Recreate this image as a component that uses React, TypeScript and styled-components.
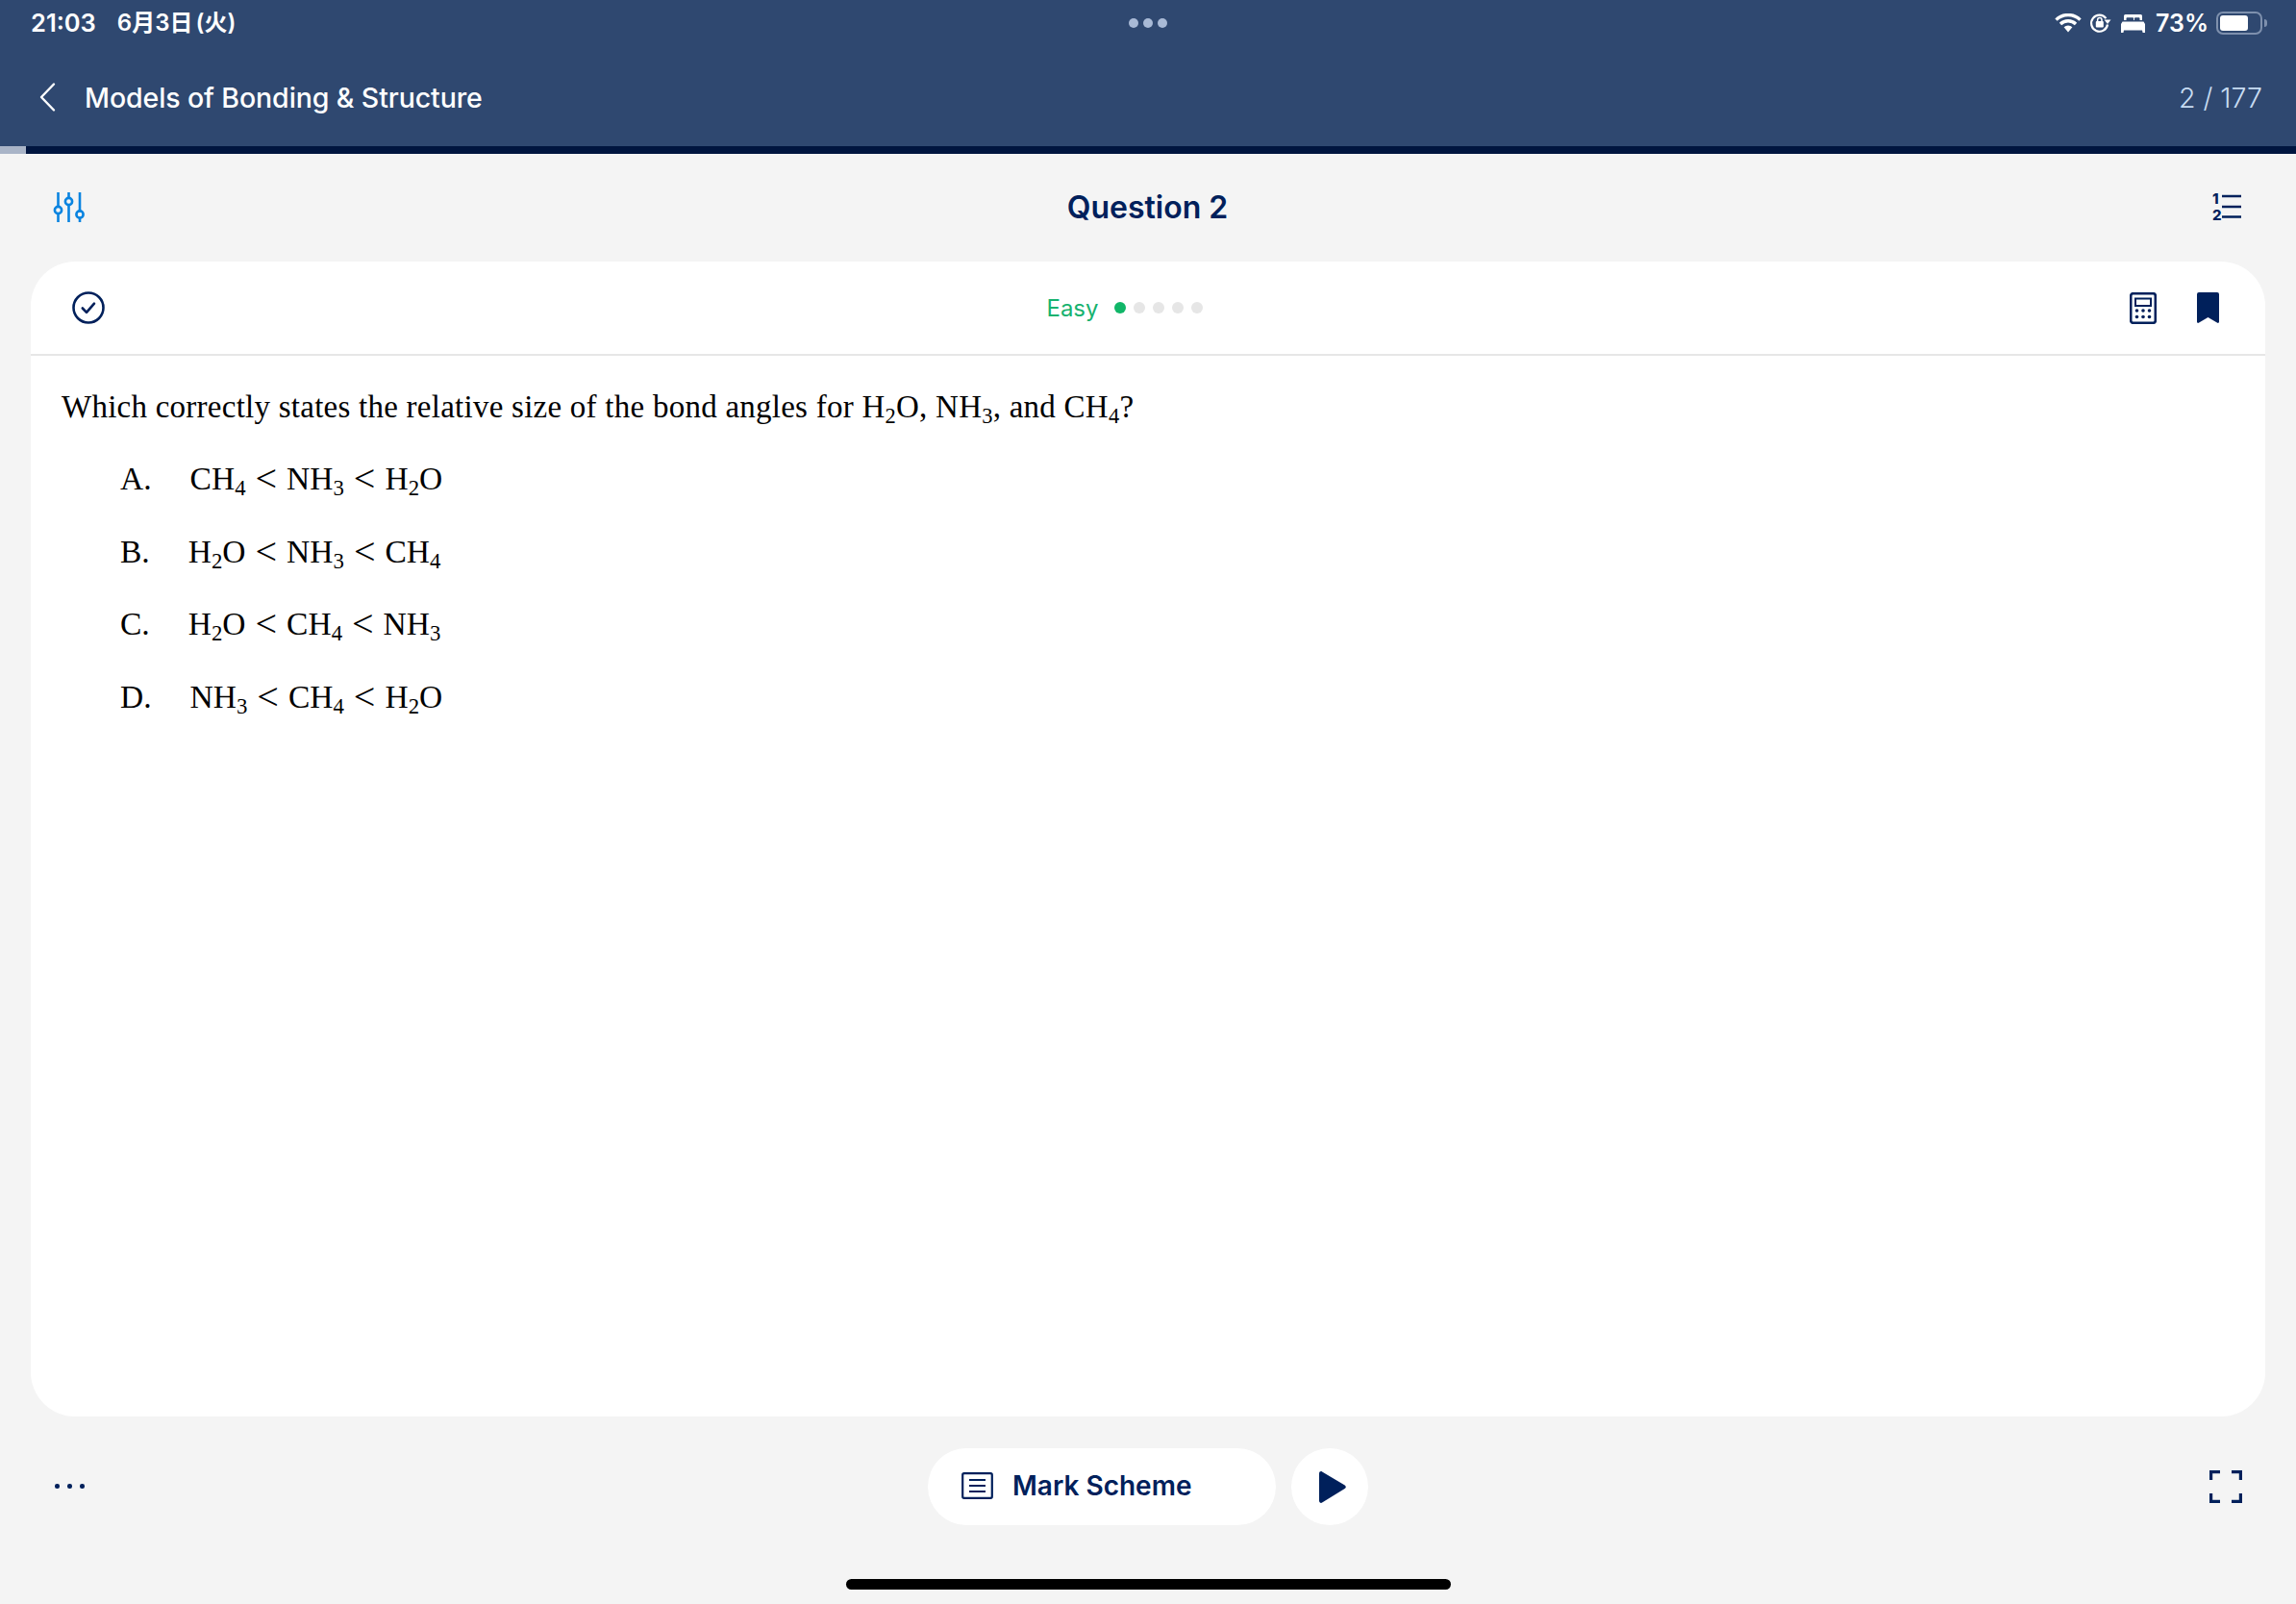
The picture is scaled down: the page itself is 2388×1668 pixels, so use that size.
import * as React from "react";
import styled, {createGlobalStyle} from "styled-components";

const NAVY = "#00205b";

const GlobalStyle = createGlobalStyle`
    html, body {
        margin: 0;
        padding: 0;
        background: #f4f4f4;
    }
    * {
        box-sizing: border-box;
    }
`;

const Page = styled.div`
    width: 2388px;
    height: 1668px;
    display: flex;
    flex-direction: column;
    background: #f4f4f4;
    font-family: Inter, "Noto Sans CJK JP", sans-serif;
    overflow: hidden;
`;

const Header = styled.header`
    height: 152px;
    background: #2f4870;
    color: #ffffff;
    display: flex;
    flex-direction: column;
`;

const StatusBar = styled.div`
    height: 48px;
    padding: 0 32px 0 32px;
    display: grid;
    grid-template-columns: 1fr auto 1fr;
    align-items: center;
`;

const StatusTime = styled.div`
    display: flex;
    align-items: center;
    gap: 22px;
    font-size: 25.5px;
    line-height: 30px;
    font-weight: 600;
`;

const DateText = styled.span`
    font-size: 24px;
    line-height: 30px;
    font-weight: 600;
    word-spacing: -3px;
`;

const MultitaskDots = styled.div`
    display: flex;
    gap: 5px;
`;

const MultitaskDot = styled.span`
    width: 10px;
    height: 10px;
    border-radius: 50%;
    background: #a9bad6;
`;

const StatusIcons = styled.div`
    display: flex;
    justify-content: flex-end;
    align-items: center;
`;

const BatteryText = styled.span`
    font-size: 25px;
    font-weight: 600;
    margin: 0 8px 0 11px;
`;

const Battery = styled.div`
    width: 48px;
    height: 24px;
    border: 2px solid #7e90ad;
    border-radius: 7px;
    padding: 2px;
    display: flex;
    position: relative;
    margin-right: 3px;
    &::after {
        content: "";
        position: absolute;
        right: -7px;
        top: 6px;
        width: 3px;
        height: 8px;
        border-radius: 0 3px 3px 0;
        background: #7e90ad;
    }
`;

const BatteryFill = styled.div`
    width: 73%;
    background: #ffffff;
    border-radius: 3px;
`;

const NavRow = styled.div`
    flex: 1;
    padding: 5px 35px 0 39px;
    display: flex;
    align-items: center;
    margin-bottom: 3px;
`;

const NavTitle = styled.div`
    flex: 1;
    margin-left: 28px;
    font-size: 28.5px;
    font-weight: 500;
    letter-spacing: -0.1px;
`;

const Counter = styled.div`
    font-size: 28.5px;
    font-weight: 300;
    color: #c7dcf2;
`;

const ProgressTrack = styled.div`
    height: 8px;
    background: #00153f;
    display: flex;
`;

const ProgressFill = styled.div`
    width: 27px;
    background: #a9b4c7;
`;

const Toolbar = styled.div`
    height: 112px;
    padding: 0 56px 2px 55px;
    display: grid;
    grid-template-columns: 1fr auto 1fr;
    align-items: center;
`;

const QuestionTitle = styled.h1`
    margin: 0;
    font-size: 32px;
    font-weight: 600;
    color: ${NAVY};
`;

const EndSlot = styled.div`
    display: flex;
    justify-content: flex-end;
`;

const Card = styled.main`
    height: 1201px;
    margin: 0 32px;
    background: #ffffff;
    border-radius: 46px;
    display: flex;
    flex-direction: column;
`;

const CardHeader = styled.div`
    height: 98px;
    padding: 0 48px 0 43px;
    border-bottom: 2px solid #e6e6e6;
    display: grid;
    grid-template-columns: 1fr auto 1fr;
    align-items: center;
`;

const Difficulty = styled.div`
    display: flex;
    align-items: center;
    gap: 8px;
    margin-left: -44px;
`;

const DifficultyLabel = styled.span`
    font-size: 24px;
    font-weight: 400;
    color: #17b26f;
    margin-right: 8px;
`;

const Dot = styled.span<{$on?: boolean}>`
    width: 12px;
    height: 12px;
    border-radius: 50%;
    background: ${props => props.$on ? "#10b668" : "#e6e6e6"};
`;

const CardTools = styled.div`
    display: flex;
    justify-content: flex-end;
    align-items: center;
    gap: 42px;
`;

const CardBody = styled.div`
    flex: 1;
    padding: 33px 32px;
    font-family: "Liberation Serif", serif;
    color: #000000;
`;

const Question = styled.p`
    margin: 0 0 35px;
    font-size: 33px;
    line-height: 40px;
    letter-spacing: 0.25px;
`;

const OptionRow = styled.div`
    height: 75.6px;
    padding-left: 61px;
    display: flex;
    align-items: flex-start;
    font-size: 33.5px;
    line-height: 40px;
`;

const OptionLabel = styled.span`
    margin-right: 40px;
`;

const Rel = styled.span`
    margin: 0 10px;
    font-size: 40px;
    line-height: 0;
    vertical-align: -2px;
`;

const Sub = styled.sub`
    font-size: 68%;
    line-height: 0;
    vertical-align: -6px;
`;

const Footer = styled.footer`
    height: 169px;
    padding: 33px 56px 0 56px;
    display: grid;
    grid-template-columns: 1fr auto 1fr;
    align-items: start;
`;

const MoreDots = styled.div`
    display: flex;
    gap: 8.5px;
    margin: 37px 0 0 1px;
`;

const MoreDot = styled.span`
    width: 4.5px;
    height: 4.5px;
    border-radius: 50%;
    background: ${NAVY};
`;

const FooterActions = styled.div`
    display: flex;
    gap: 16px;
`;

const SchemeButton = styled.button`
    width: 362px;
    height: 80px;
    border: 0;
    border-radius: 40px;
    background: #ffffff;
    padding: 0 0 2px 35px;
    display: flex;
    align-items: center;
    gap: 20px;
    font-family: Inter, sans-serif;
    font-size: 28px;
    font-weight: 600;
    color: ${NAVY};
`;

const PlayButton = styled.button`
    width: 80px;
    height: 80px;
    border: 0;
    border-radius: 50%;
    background: #ffffff;
    padding: 0 0 0 6px;
    display: flex;
    align-items: center;
    justify-content: center;
`;

const FullscreenSlot = styled(EndSlot)`
    padding-top: 23px;
`;

const HomeRow = styled.div`
    display: flex;
    justify-content: center;
`;

const HomeBar = styled.div`
    width: 629px;
    height: 11px;
    border-radius: 6px;
    background: #000000;
`;

const ListSvg = styled.svg`
    margin: -6px 0;
`;

const H2O = () => <>H<Sub>2</Sub>O</>;
const NH3 = () => <>NH<Sub>3</Sub></>;
const CH4 = () => <>CH<Sub>4</Sub></>;

const OPTIONS: Array<[string, Array<React.FC>]> = [
    ["A.", [CH4, NH3, H2O]],
    ["B.", [H2O, NH3, CH4]],
    ["C.", [H2O, CH4, NH3]],
    ["D.", [NH3, CH4, H2O]],
];

function Option(props: {label: string, parts: Array<React.FC>}) {
    return (
        <OptionRow>
            <OptionLabel>{props.label}</OptionLabel>
            <span>
                {props.parts.map((Part, i) => (
                    <React.Fragment key={i}>
                        {i > 0 && <Rel>&lt;</Rel>}
                        <Part/>
                    </React.Fragment>
                ))}
            </span>
        </OptionRow>
    );
}

const WifiIcon = () => (
    <svg width="28" height="20" viewBox="0 0 28 20" style={{marginRight: 8}}>
        <path fill="none" stroke="#fff" strokeWidth="3.4" d="M1.5 6.6a18 18 0 0 1 25 0M6 11a11.6 11.6 0 0 1 16 0"/>
        <path fill="#fff" d="M9.6 14.3a6.4 6.4 0 0 1 8.8 0L14 19.4z"/>
    </svg>
);

const RotationLockIcon = () => (
    <svg width="23" height="22" viewBox="0 0 23 22" style={{marginRight: 10}}>
        <path fill="none" stroke="#fff" strokeWidth="2.2" d="M19 12.5a8.5 8.5 0 1 1-1.6-6.4"/>
        <path fill="#fff" d="M15.5 7.5h7l-3.5 4.5z"/>
        <rect x="6.8" y="9" width="8" height="6.5" rx="1" fill="#fff"/>
        <path fill="none" stroke="#fff" strokeWidth="1.5" d="M8.6 9.5V7.8a2.2 2.2 0 0 1 4.4 0v1.7"/>
    </svg>
);

const BedIcon = () => (
    <svg width="25" height="19" viewBox="0 0 25 19">
        <path fill="#fff" d="M3 1.5A1.5 1.5 0 0 1 4.5 0h16A1.5 1.5 0 0 1 22 1.5V6h-2.5V4.2c0-.5-.4-.9-.9-.9h-3.7c-.5 0-.9.4-.9.9V6h-.9V4.2c0-.5-.4-.9-.9-.9H6.4c-.5 0-.9.4-.9.9V6H3z"/>
        <path fill="#fff" d="M1.5 7.5h22L25 10v9h-2.4l-.6-2.4H3L2.4 19H0v-9z"/>
    </svg>
);

const BackIcon = () => (
    <svg width="21" height="32" viewBox="0 0 21 32">
        <path fill="none" stroke="#fff" strokeWidth="2.4" strokeLinecap="round" strokeLinejoin="round" d="M17 2.5 4 16l13 13.5"/>
    </svg>
);

const SlidersIcon = () => (
    <svg width="34" height="31" viewBox="0 0 34 31" fill="none" stroke="#0a84e0" strokeWidth="2.6">
        <path d="M5.5 0v16M5.5 23v8M16.5 0v6M16.5 13v18M28 0v19M28 26v5"/>
        <circle cx="5.5" cy="18.5" r="3.6"/>
        <circle cx="16.5" cy="9.5" r="3.6"/>
        <circle cx="28" cy="23" r="3.6"/>
    </svg>
);

const NumberedListIcon = () => (
    <ListSvg width="32" height="43" viewBox="0 -6 32 43">
        <text x="1" y="12" fontFamily="Inter, sans-serif" fontSize="15" fontWeight="800" fill={NAVY}>1</text>
        <text x="1" y="29" fontFamily="Inter, sans-serif" fontSize="15" fontWeight="800" fill={NAVY}>2</text>
        <path stroke={NAVY} strokeWidth="2.6" d="M11 4h20M11 15h20M11 25.5h20"/>
    </ListSvg>
);

const CheckCircleIcon = () => (
    <svg width="34" height="34" viewBox="0 0 34 34" fill="none" stroke={NAVY}>
        <circle cx="17" cy="17" r="15.5" strokeWidth="2.6"/>
        <path strokeWidth="2.6" strokeLinecap="round" strokeLinejoin="round" d="m10.8 17.5 4.2 4.4 8-9.2"/>
    </svg>
);

const CalculatorIcon = () => (
    <svg width="28" height="33" viewBox="0 0 28 33">
        <rect x="1.2" y="1.2" width="25.6" height="30.6" rx="2.5" fill="none" stroke={NAVY} strokeWidth="2.6"/>
        <rect x="6" y="6.5" width="16" height="7.5" fill="none" stroke={NAVY} strokeWidth="2"/>
        {[7.5, 14, 20.5].map(x => [19, 25.5].map(y => (
            <circle key={x + "-" + y} cx={x} cy={y} r="1.8" fill={NAVY}/>
        )))}
    </svg>
);

const BookmarkIcon = () => (
    <svg width="23" height="32" viewBox="0 0 23 32">
        <path fill={NAVY} d="M2 0h19a2 2 0 0 1 2 2v28.8c0 .9-1 1.4-1.7 1l-9.8-5.8-9.8 5.8c-.7.4-1.7-.1-1.7-1V2a2 2 0 0 1 2-2z"/>
    </svg>
);

const SchemeIcon = () => (
    <svg width="33" height="28" viewBox="0 0 33 28" fill="none" stroke={NAVY}>
        <rect x="1.2" y="1.2" width="30.6" height="25.6" rx="1.5" strokeWidth="2.2"/>
        <path strokeWidth="2.2" d="M8 8h17M8 14h17M8 20h17"/>
    </svg>
);

const PlayIcon = () => (
    <svg width="28" height="33" viewBox="0 0 28 33">
        <path fill={NAVY} d="M0 2.2C0 .6 1.7-.4 3.1.4l23.6 14.2c1.3.8 1.3 2.7 0 3.5L3.1 32.6C1.7 33.4 0 32.4 0 30.8z"/>
    </svg>
);

const FullscreenIcon = () => (
    <svg width="34" height="34" viewBox="0 0 34 34" fill="none" stroke={NAVY} strokeWidth="3.2">
        <path d="M1.6 10V1.6H11M23 1.6h9.4V10M1.6 24v8.4H11M23 32.4h9.4V24"/>
    </svg>
);

export default function App() {
    return (
        <Page>
            <GlobalStyle/>
            <Header>
                <StatusBar>
                    <StatusTime>
                        <span>21:03</span>
                        <DateText>6月3日 (火)</DateText>
                    </StatusTime>
                    <MultitaskDots>
                        <MultitaskDot/>
                        <MultitaskDot/>
                        <MultitaskDot/>
                    </MultitaskDots>
                    <StatusIcons>
                        <WifiIcon/>
                        <RotationLockIcon/>
                        <BedIcon/>
                        <BatteryText>73%</BatteryText>
                        <Battery><BatteryFill/></Battery>
                    </StatusIcons>
                </StatusBar>
                <NavRow>
                    <BackIcon/>
                    <NavTitle>Models of Bonding &amp; Structure</NavTitle>
                    <Counter>2 / 177</Counter>
                </NavRow>
            </Header>
            <ProgressTrack><ProgressFill/></ProgressTrack>
            <Toolbar>
                <SlidersIcon/>
                <QuestionTitle>Question 2</QuestionTitle>
                <EndSlot><NumberedListIcon/></EndSlot>
            </Toolbar>
            <Card>
                <CardHeader>
                    <CheckCircleIcon/>
                    <Difficulty>
                        <DifficultyLabel>Easy</DifficultyLabel>
                        <Dot $on/>
                        <Dot/>
                        <Dot/>
                        <Dot/>
                        <Dot/>
                    </Difficulty>
                    <CardTools>
                        <CalculatorIcon/>
                        <BookmarkIcon/>
                    </CardTools>
                </CardHeader>
                <CardBody>
                    <Question>
                        Which correctly states the relative size of the bond angles for H<Sub>2</Sub>O, NH<Sub>3</Sub>, and CH<Sub>4</Sub>?
                    </Question>
                    {OPTIONS.map(option => (
                        <Option key={option[0]} label={option[0]} parts={option[1]}/>
                    ))}
                </CardBody>
            </Card>
            <Footer>
                <MoreDots>
                    <MoreDot/>
                    <MoreDot/>
                    <MoreDot/>
                </MoreDots>
                <FooterActions>
                    <SchemeButton><SchemeIcon/>Mark Scheme</SchemeButton>
                    <PlayButton><PlayIcon/></PlayButton>
                </FooterActions>
                <FullscreenSlot><FullscreenIcon/></FullscreenSlot>
            </Footer>
            <HomeRow><HomeBar/></HomeRow>
        </Page>
    );
}
